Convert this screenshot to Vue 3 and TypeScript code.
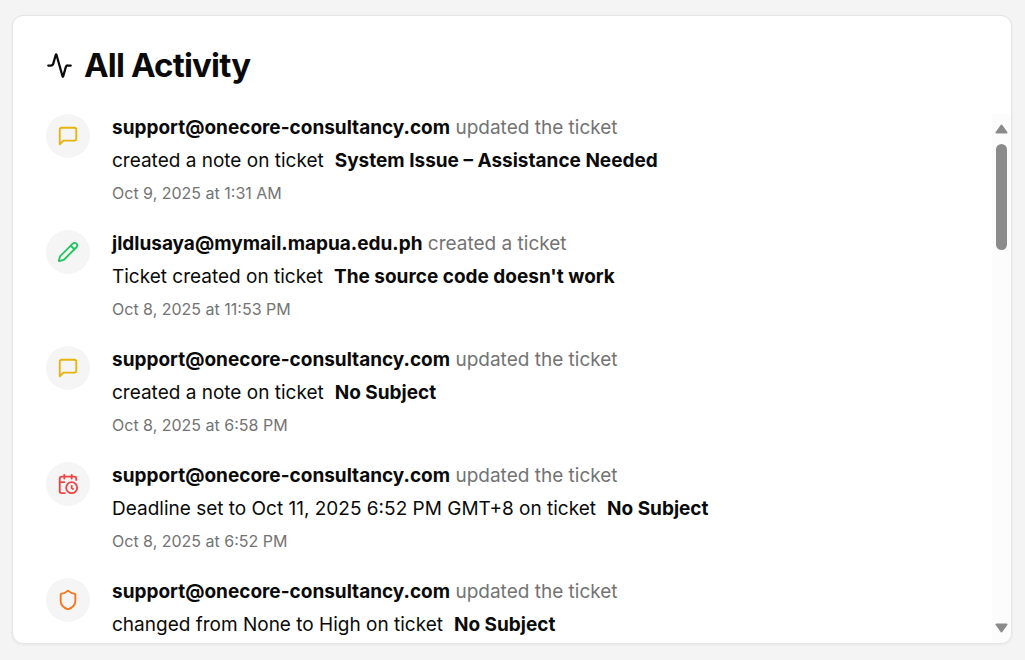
<script setup lang="ts">
import { ref } from 'vue'

type Kind = 'note' | 'created' | 'deadline' | 'priority'

interface Activity {
  id: number
  kind: Kind
  user: string
  action: string
  detail: string
  subject: string
  date: string
}

const support = 'support@onecore-consultancy.com'

const activities: Activity[] = [
  { id: 1, kind: 'note', user: support, action: 'updated the ticket', detail: 'created a note on ticket', subject: 'System Issue – Assistance Needed', date: 'Oct 9, 2025 at 1:31 AM' },
  { id: 2, kind: 'created', user: 'jldlusaya@mymail.mapua.edu.ph', action: 'created a ticket', detail: 'Ticket created on ticket', subject: "The source code doesn't work", date: 'Oct 8, 2025 at 11:53 PM' },
  { id: 3, kind: 'note', user: support, action: 'updated the ticket', detail: 'created a note on ticket', subject: 'No Subject', date: 'Oct 8, 2025 at 6:58 PM' },
  { id: 4, kind: 'deadline', user: support, action: 'updated the ticket', detail: 'Deadline set to Oct 11, 2025 6:52 PM GMT+8 on ticket', subject: 'No Subject', date: 'Oct 8, 2025 at 6:52 PM' },
  { id: 5, kind: 'priority', user: support, action: 'updated the ticket', detail: 'changed from None to High on ticket', subject: 'No Subject', date: '' },
]

const iconPaths: Record<Kind, string[]> = {
  note: ['M21 15a2 2 0 0 1-2 2H7l-4 4V5a2 2 0 0 1 2-2h14a2 2 0 0 1 2 2z'],
  created: [
    'M21.174 6.812a1 1 0 0 0-3.986-3.987L3.842 16.174a2 2 0 0 0-.5.83l-1.321 4.352a.5.5 0 0 0 .623.622l4.353-1.32a2 2 0 0 0 .83-.497z',
    'm15 5 4 4',
  ],
  deadline: [
    'M21 7.5V6a2 2 0 0 0-2-2H5a2 2 0 0 0-2 2v14a2 2 0 0 0 2 2h3.5',
    'M16 2v4',
    'M8 2v4',
    'M3 10h5',
    'M17.5 17.5 16 16.3V14',
    'M22 16a6 6 0 1 1-12 0 6 6 0 0 1 12 0z',
  ],
  priority: [
    'M20 13c0 5-3.5 7.5-7.66 8.95a1 1 0 0 1-.67-.01C7.5 20.5 4 18 4 13V6a1 1 0 0 1 1-1c2 0 4.5-1.2 6.24-2.72a1.17 1.17 0 0 1 1.52 0C14.51 3.81 17 5 19 5a1 1 0 0 1 1 1z',
  ],
}

const list = ref<HTMLElement | null>(null)

function scrollList(distance: number) {
  list.value?.scrollBy({ top: distance })
}
</script>

<template>
  <main class="page">
    <section class="card" aria-labelledby="activity-title">
      <header class="header">
        <svg class="pulse" viewBox="0 0 24 24" aria-hidden="true">
          <path d="M22 12h-2.48a2 2 0 0 0-1.93 1.46l-2.35 8.36a.25.25 0 0 1-.48 0L9.24 2.18a.25.25 0 0 0-.48 0l-2.35 8.36A2 2 0 0 1 4.49 12H2" />
        </svg>
        <h1 id="activity-title" class="title">All Activity</h1>
      </header>

      <div class="body">
        <ul ref="list" class="list">
          <li v-for="item in activities" :key="item.id" class="item">
            <span class="badge" :class="item.kind">
              <svg class="icon" viewBox="0 0 24 24" aria-hidden="true">
                <path v-for="d in iconPaths[item.kind]" :key="d" :d="d" />
              </svg>
            </span>
            <div class="text">
              <p class="line">
                <strong class="strong">{{ item.user }}</strong>
                <span class="muted">{{ ' ' + item.action }}</span>
              </p>
              <p class="line detail">
                <span>{{ item.detail }}</span>
                <strong class="strong">{{ item.subject }}</strong>
              </p>
              <time v-if="item.date" class="date">{{ item.date }}</time>
            </div>
          </li>
        </ul>

        <div class="scrollbar">
          <button class="arrow" type="button" aria-label="Scroll up" @click="scrollList(-60)">
            <svg class="triangle" viewBox="0 0 13 10" aria-hidden="true"><path d="M6.500 1.500 11.500 8.500H1.500z" /></svg>
          </button>
          <div class="track"><div class="thumb"></div></div>
          <button class="arrow" type="button" aria-label="Scroll down" @click="scrollList(60)">
            <svg class="triangle" viewBox="0 0 13 10" aria-hidden="true"><path d="M1.500 1.500h10l-5 7z" /></svg>
          </button>
        </div>
      </div>
    </section>
  </main>
</template>

<style>
body {
  margin: 0;
  background: #f4f4f4;
}
</style>

<style scoped>
.page {
  box-sizing: border-box;
  display: flex;
  height: 100vh;
  padding: 15px 13px 16px 12px;
  font-family: Inter, "Liberation Sans", sans-serif;
  color: #0a0a0a;
}

.card {
  display: flex;
  flex: 1;
  flex-direction: column;
  min-width: 0;
  overflow: hidden;
  background: #fff;
  border: 1px solid #e5e5e5;
  border-radius: 11px;
  box-shadow: 0 1px 3px rgba(0, 0, 0, 0.06);
}

.header {
  display: flex;
  align-items: center;
  gap: 11px;
  padding: 33px 33px 32px;
}

.pulse {
  width: 27px;
  height: 27px;
  fill: none;
  stroke: currentColor;
  stroke-width: 2;
  stroke-linecap: round;
  stroke-linejoin: round;
}

.title {
  margin: 0;
  font-size: 33px;
  font-weight: 700;
  line-height: 33px;
  letter-spacing: -0.025em;
}

.body {
  display: flex;
  flex: 1;
  min-height: 0;
}

.list {
  display: flex;
  flex: 1;
  flex-direction: column;
  gap: 24px;
  min-width: 0;
  margin: 0;
  padding: 0 33px;
  overflow-y: auto;
  list-style: none;
  scrollbar-width: none;
}

.item {
  display: flex;
  gap: 22px;
}

.badge {
  display: flex;
  flex: none;
  align-items: center;
  justify-content: center;
  width: 44px;
  height: 44px;
  border-radius: 50%;
  background: #f5f5f5;
}

.icon {
  width: 22px;
  height: 22px;
  fill: none;
  stroke: currentColor;
  stroke-width: 2;
  stroke-linecap: round;
  stroke-linejoin: round;
}

.note {
  color: #eab308;
}

.created {
  color: #22c55e;
}

.deadline {
  color: #ef4444;
}

.priority {
  color: #f97316;
}

.text {
  display: flex;
  flex-direction: column;
  gap: 5px;
  min-width: 0;
}

.line {
  margin: 0;
  font-size: 19px;
  line-height: 28px;
}

.detail {
  display: flex;
  flex-wrap: wrap;
  column-gap: 11px;
}

.strong {
  font-weight: 700;
}

.muted,
.date {
  color: #737373;
}

.date {
  font-size: 16px;
  line-height: 26px;
}

.scrollbar {
  display: flex;
  flex: none;
  flex-direction: column;
  width: 19px;
  background: #fcfcfc;
}

.arrow {
  display: flex;
  align-items: center;
  justify-content: center;
  height: 30px;
  padding: 0;
  border: 0;
  background: none;
}

.triangle {
  width: 13px;
  height: 10px;
  fill: #8b8b8b;
  stroke: #8b8b8b;
  stroke-width: 2;
  stroke-linejoin: round;
}

.track {
  display: flex;
  flex: 1;
  justify-content: center;
}

.thumb {
  width: 11px;
  height: 106px;
  border-radius: 6px;
  background: #8b8b8b;
}
</style>
